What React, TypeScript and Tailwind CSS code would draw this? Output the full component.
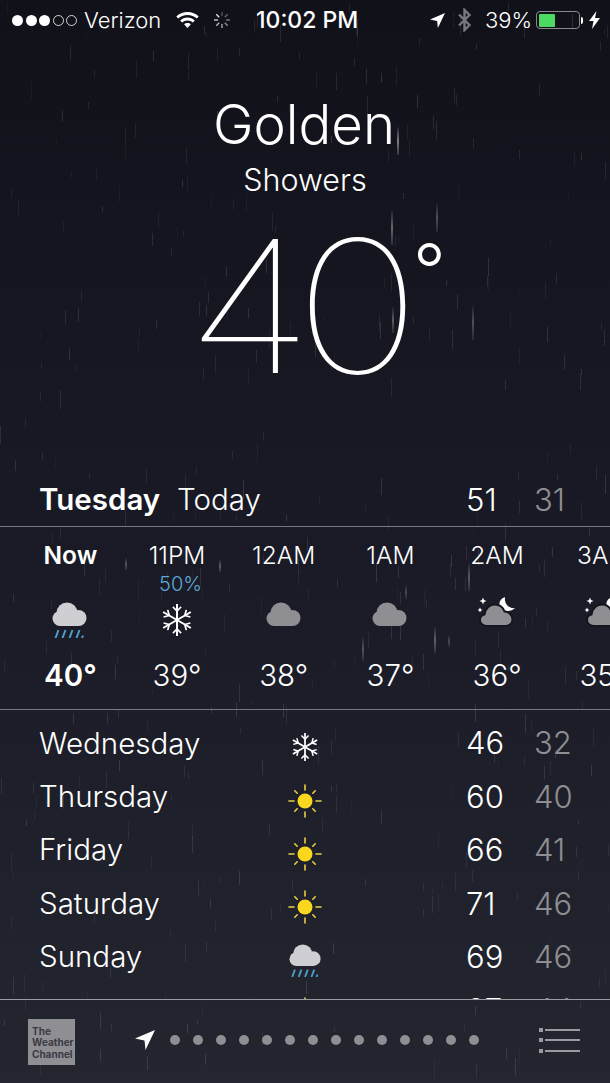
const hours = [
  { label: 'Now', temp: '40°', icon: 'rain', bold: true },
  { label: '11PM', temp: '39°', icon: 'snow', chance: '50%' },
  { label: '12AM', temp: '38°', icon: 'cloud' },
  { label: '1AM', temp: '37°', icon: 'cloud' },
  { label: '2AM', temp: '36°', icon: 'moon' },
  { label: '3AM', temp: '35°', icon: 'moon' },
];

const days = [
  { name: 'Wednesday', icon: 'snow', hi: 46, lo: 32 },
  { name: 'Thursday', icon: 'sun', hi: 60, lo: 40 },
  { name: 'Friday', icon: 'sun', hi: 66, lo: 41 },
  { name: 'Saturday', icon: 'sun', hi: 71, lo: 46 },
  { name: 'Sunday', icon: 'rain', hi: 69, lo: 46 },
  { name: 'Monday', icon: 'sun', hi: 67, lo: 44 },
];

// the big streaks that stand out in the picture
const bigDrops = [
  [397, 127, 28, 0.45], [391, 210, 35, 0.35], [436, 203, 29, 0.25], [392, 307, 26, 0.3],
  [472, 305, 35, 0.25], [468, 563, 28, 0.28], [434, 627, 26, 0.3], [362, 637, 24, 0.25],
  [405, 585, 14, 0.2], [448, 635, 12, 0.2], [125, 558, 12, 0.25], [219, 560, 12, 0.3],
];

function makeDrops() {
  let seed = 41;
  const rand = () => {
    seed = (seed * 16807) % 2147483647;
    return seed / 2147483647;
  };
  const out: number[][] = [];
  for (let i = 0; i < 380; i++) {
    out.push([rand() * 610, rand() * 1083, 5 + rand() * 14, 0.03 + rand() * 0.09]);
  }
  return out;
}

const smallDrops = makeDrops();

const Cloud = ({ fill }: { fill: string }) => (
  <g fill={fill}>
    <circle cx="8" cy="16.500" r="7.500" />
    <circle cx="15" cy="11" r="10.500" />
    <circle cx="26.500" cy="16" r="8" />
    <rect x="8" y="14" width="19" height="10" />
  </g>
);

const WeatherIcon = ({ type, size = 36 }: { type: string; size?: number }) => {
  if (type === 'snow') {
    return (
      <svg width={size} height={size} viewBox="0 0 32 32" fill="none" stroke="#fff" strokeWidth="2" strokeLinecap="square">
        {[0, 60, 120].map((a) => (
          <g key={a} transform={`rotate(${a} 16 16)`}>
            <path d="M16 1V31" />
            <path d="M12.500 3.500L16 7L19.500 3.500M12.500 28.500L16 25L19.500 28.500" strokeWidth="1.700" />
          </g>
        ))}
      </svg>
    );
  }
  if (type === 'sun') {
    return (
      <svg width={size} height={size} viewBox="0 0 36 36" fill="none" stroke="#e8cf45" strokeWidth="1.600" strokeLinecap="round">
        <circle cx="18" cy="18" r="7.500" fill="#fbd61e" stroke="none" />
        {[0, 90, 180, 270].map((a) => (
          <path key={a} d="M18 2V7" transform={`rotate(${a} 18 18)`} />
        ))}
        {[45, 135, 225, 315].map((a) => (
          <path key={a} d="M18 3.500V7" transform={`rotate(${a} 18 18)`} />
        ))}
      </svg>
    );
  }
  if (type === 'rain') {
    return (
      <svg width={size} height={size} viewBox="0 0 36 36" fill="none">
        <Cloud fill="#cfcfd3" />
        <path d="M3.500 36L6.500 28M10.500 36L13.500 28M17.500 36L20.500 28M24.500 36L27.500 28" stroke="#4f9ecb" strokeWidth="2" />
        <path d="M30 36L31 33.500" stroke="#4f9ecb" strokeWidth="2" />
      </svg>
    );
  }
  if (type === 'moon') {
    return (
      <svg width={size} height={size} viewBox="0 0 36 36" fill="none" className="overflow-visible">
        <path d="M26 -5C20 -3 19 3 22 6C25 10 32 10 36 6C30 7 25 2 26 -5Z" fill="#fff" />
        <path d="M4 -4.500L5 -2L7.500 -1L5 0L4 2.500L3 0L0.500 -1L3 -2Z" fill="#fff" />
        <path d="M1 5.500L1.800 7.200L3.500 8L1.800 8.800L1 10.500L0.200 8.800L-1.500 8L0.200 7.200Z" fill="#fff" />
        <g stroke="#15151f" strokeWidth="2">
          <path
            d="M7.500 24C4 24 1 21.500 1 18C1 15 3 13 5.500 12.500C6.500 6 11 2.500 16 2.500C20.500 2.500 24 5.500 25.500 9.500C30 9.500 33.500 13.500 33.500 17.500C33.500 21 30.500 24 27 24Z"
            fill="#8e8e93"
          />
        </g>
      </svg>
    );
  }
  return (
    <svg width={size} height={size} viewBox="0 0 36 36" fill="none">
      <Cloud fill="#8e8e93" />
    </svg>
  );
};

const Spinner = () => (
  <svg width="18" height="18" viewBox="0 0 18 18" stroke="#fff" strokeWidth="1.400">
    {[0, 45, 90, 135, 180, 225, 270, 315].map((a, i) => (
      <path key={a} d="M9 1V5" opacity={0.25 + (i % 8) * 0.09} transform={`rotate(${a} 9 9)`} />
    ))}
  </svg>
);

const Wifi = () => (
  <svg width="23" height="16" viewBox="0 0 23 16" fill="#fff">
    <path d="M11.500 0C7 0 3.200 1.700 0.300 4.400L2.200 6.500C4.600 4.300 7.900 2.900 11.500 2.900C15.100 2.900 18.400 4.300 20.800 6.500L22.700 4.400C19.800 1.700 16 0 11.500 0Z" />
    <path d="M11.500 5.500C8.700 5.500 6.200 6.600 4.200 8.400L6.100 10.500C7.500 9.200 9.400 8.400 11.500 8.400C13.600 8.400 15.500 9.200 16.900 10.500L18.800 8.400C16.800 6.600 14.300 5.500 11.500 5.500Z" />
    <path d="M11.500 11C10.200 11 9 11.500 8.100 12.300L11.500 16L14.900 12.300C14 11.500 12.800 11 11.500 11Z" />
  </svg>
);

const Arrow = ({ size, className }: { size: number; className?: string }) => (
  <svg width={size} height={size} viewBox="0 0 20 20" fill="#fff" className={className}>
    <path d="M20 0L10.500 20L9.500 10.500L0 8.500Z" />
  </svg>
);

export default function App() {
  return (
    <div
      className="relative w-[610px] h-[1083px] overflow-hidden bg-gradient-to-b from-[#11111a] via-[#191a25] to-[#23252f] text-white flex flex-col"
      style={{ fontFamily: 'Inter, "Liberation Sans", sans-serif' }}
    >
      <div className="absolute inset-0 blur-[0.6px]">
        {smallDrops.map(([x, y, h, o], i) => (
          <div key={i} className="absolute w-[1px] bg-white" style={{ left: x, top: y, height: h, opacity: o }} />
        ))}
        {bigDrops.map(([x, y, h, o], i) => (
          <div
            key={i}
            className="absolute w-[2px] bg-gradient-to-b from-white/10 via-white to-white/30"
            style={{ left: x, top: y, height: h, opacity: o }}
          />
        ))}
      </div>

      <div className="relative h-[40px] shrink-0 flex items-center pl-[12px] text-[22px]">
        <div className="flex items-center gap-[2.500px]">
          <span className="w-[11px] h-[11px] rounded-full bg-white" />
          <span className="w-[11px] h-[11px] rounded-full bg-white" />
          <span className="w-[11px] h-[11px] rounded-full bg-white" />
          <span className="w-[11px] h-[11px] rounded-full border border-white/80" />
          <span className="w-[11px] h-[11px] rounded-full border border-white/80" />
        </div>
        <span className="ml-[7px] font-light w-[92px]">Verizon</span>
        <Wifi />
        <span className="ml-[14px]"><Spinner /></span>
        <span className="ml-[25px] font-medium text-[23px] w-[174px]">10:02 PM</span>
        <Arrow size={15} />
        <svg width="15" height="24" viewBox="0 0 15 24" fill="none" stroke="#77777c" strokeWidth="2.400" className="ml-[12px]">
          <path d="M2 6.500L12.500 17L7.500 22V2L12.500 7L2 17.500" />
        </svg>
        <span className="ml-[13px] font-light w-[51px]">39%</span>
        <div className="w-[44px] h-[18px] rounded-[4px] border border-[#8a8a8a] p-[1.500px]">
          <div className="w-[16px] h-full rounded-[1px] bg-[#4cd964]" />
        </div>
        <span className="w-[2px] h-[7px] bg-white rounded-r-sm ml-[1px]" />
        <svg width="11" height="18" viewBox="0 0 11 18" fill="#fff" className="ml-[6px]">
          <path d="M7.500 0L0 10H4.500L3 18L11 7H6Z" />
        </svg>
      </div>

      <div className="relative flex flex-col items-center">
        <h1 className="mt-[50px] ml-[-2px] text-[54.500px] leading-[68px] font-light">Golden</h1>
        <p className="mt-[4px] text-[30.500px] leading-[36px] font-light">Showers</p>
        <div className="relative mt-[13px] ml-[-22px] h-[190px] text-[184px] leading-[190px] font-thin">
          <span className="inline-block scale-x-[1.16] tracking-[-16px]">40</span>
          <span className="absolute left-[212px] top-[19px] text-[72px] leading-[80px] font-light">°</span>
        </div>
      </div>

      <div className="relative mt-[72px] h-[53px] shrink-0 flex items-center pl-[39px] text-[29.500px] font-light">
        <span className="font-semibold w-[138px]">Tuesday</span>
        <span className="w-[289px]">Today</span>
        <span className="w-[68px] text-[31px] pt-[2px]">51</span>
        <span className="text-[31px] pt-[2px] text-[#8e8e93]">31</span>
      </div>

      <div className="relative h-[184px] shrink-0 border-y border-[#77787e] flex pl-[17px] overflow-hidden">
        {hours.map((h) => (
          <div key={h.label} className="w-[106.700px] shrink-0 flex flex-col items-center">
            <div className={`mt-[15px] text-[24.500px] leading-[26px] ${h.bold ? 'font-semibold' : 'font-light'}`}>{h.label}</div>
            <div className="mt-[5px] ml-[7px] h-[22px] text-[20px] leading-[22px] font-light text-[#5aa9d6]">{h.chance}</div>
            <div className="mt-[7px] h-[36px] flex items-center justify-center"><WeatherIcon type={h.icon} size={h.icon === 'snow' ? 32 : 36} /></div>
            <div className={`mt-[20px] text-[29.500px] leading-[34px] ${h.bold ? 'font-semibold' : 'font-light'}`}>{h.temp}</div>
          </div>
        ))}
      </div>

      <div className="relative h-[289px] shrink-0 pt-[6px] overflow-hidden">
        {days.map((d) => (
          <div key={d.name} className="h-[53.400px] flex items-center text-[29.500px] font-light pl-[39px]">
            <span className="w-[248px]">{d.name}</span>
            <span className="w-[179px]">
              <span className="w-[36px] h-[36px] mt-[9px] flex items-center justify-center">
                <WeatherIcon type={d.icon} size={d.icon === 'snow' ? 28 : d.icon === 'rain' ? 33 : 36} />
              </span>
            </span>
            <span className="w-[68px] text-[31px] pt-[2px]">{d.hi}</span>
            <span className="text-[31px] pt-[2px] text-[#8e8e93]">{d.lo}</span>
          </div>
        ))}
      </div>

      <div className="relative flex-1 border-t border-[#9a9ba0] flex items-center pl-[28px]">
        <div className="w-[47px] h-[46px] bg-[#8e8e93] text-[#3a3b44] text-[10px] leading-[11.500px] font-bold pl-[4px] pt-[7px]">
          The<br />Weather<br />Channel
        </div>
        <div className="ml-[60px] mb-[3px] flex items-center">
          <Arrow size={20} />
          <div className="ml-[15px] flex gap-[13px]">
            {Array.from({ length: 14 }).map((_, i) => (
              <span key={i} className="w-[10px] h-[10px] rounded-full bg-[#8e8e93]" />
            ))}
          </div>
          <div className="ml-[60px] flex flex-col gap-[6.500px]">
            {[0, 1, 2].map((i) => (
              <div key={i} className="flex items-center gap-[2px]">
                <span className="w-[4px] h-[4px] bg-[#9a9aa0]" />
                <span className="w-[35px] h-[2px] bg-[#9a9aa0]" />
              </div>
            ))}
          </div>
        </div>
      </div>
    </div>
  );
}
